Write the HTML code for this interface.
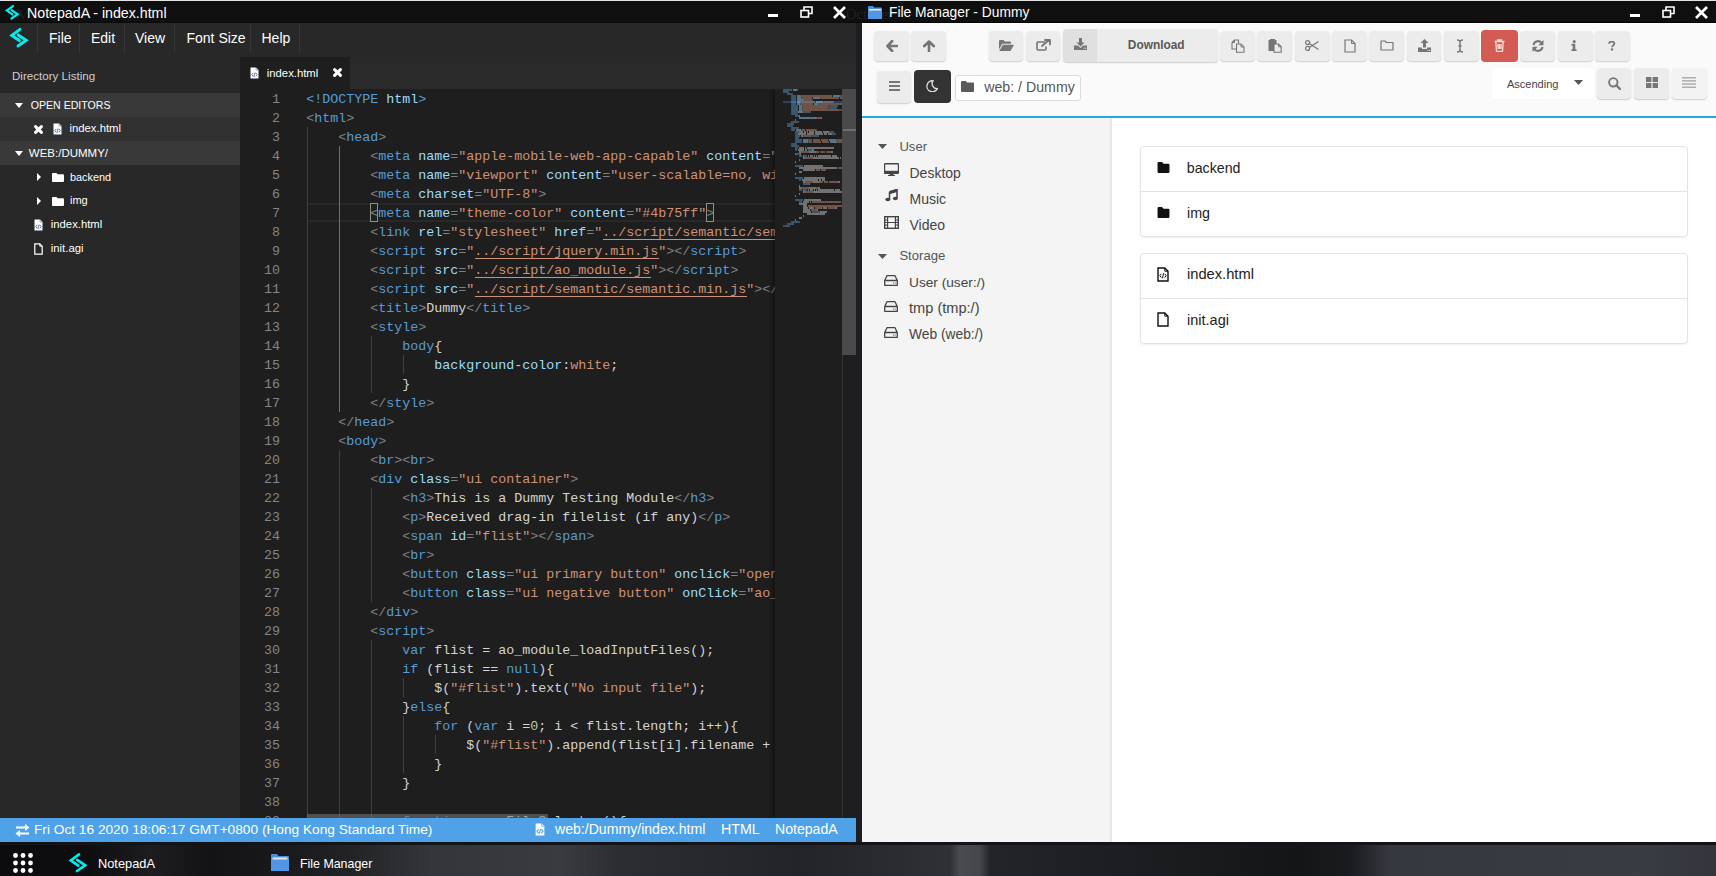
<!DOCTYPE html>
<html><head><meta charset="utf-8"><title>NotepadA</title><style>
*{box-sizing:border-box;margin:0;padding:0}
html,body{width:1716px;height:876px;overflow:hidden}
body{position:relative;font-family:"Liberation Sans",sans-serif;background:#15171a}
.a{position:absolute}
.t{line-height:1;white-space:nowrap}
.code{font-family:"Liberation Mono",monospace;font-size:13.333px;line-height:19px;white-space:pre;color:#d4d4d4}
.ln{font-family:"Liberation Mono",monospace;font-size:13.333px;line-height:19px;color:#858585;text-align:right;width:40px}
.d{color:#808080}.tg{color:#569cd6}.n{color:#9cdcfe}.s{color:#ce9178}.k{color:#569cd6}.g{color:#b5cea8}.c{color:#9cdcfe}
.mm{height:1.6px;opacity:.46}
.btn{background:#ececec;border-radius:4px;box-shadow:0 1px 1.5px rgba(0,0,0,.18)}
</style></head><body>
<div class="a" style="left:0;top:842px;width:1716px;height:34px;background:linear-gradient(90deg,#0c0c0e 0px,#0e0e10 90px,#1d1d1f 150px,#131315 210px,#1a1a1d 290px,#222326 350px,#34353a 430px,#3a3b40 560px,#2c2d31 620px,#232428 800px,#2b2c30 900px,#303135 950px,#4a4b50 960px,#45464b 980px,#232427 990px,#1c1d20 1144px,#141517 1300px,#1a1b1e 1350px,#363840 1390px,#3a3c44 1640px,#33353b 1716px)"></div>
<div class="a" style="left:0;top:842px;width:1716px;height:3px;background:#131417"></div>
<div class="a" style="left:0;top:0;width:1716px;height:1px;background:#e4e4e4"></div>
<div class="a" style="left:0;top:1px;width:1716px;height:22px;background:#0f0f0f"></div>
<div class="a" style="left:0;top:22px;width:862px;height:1px;background:#0a0a0a"></div>
<div class="a t" style="left:16px;top:6px;font-family:Liberation Serif,serif;font-size:17px;color:#1c1c1c">My</div>
<div class="a t" style="left:846px;top:6.5px;font-family:Liberation Serif,serif;font-size:14.5px;color:#222">October</div>
<div class="a" style="left:856px;top:23px;width:6px;height:819px;background:#1b1d20"></div>
<svg class="a" style="left:1.3px;top:2.3px" width="22.5" height="21.0" viewBox="0 0 30 28"><g fill="none" stroke="#00eeee" stroke-width="3.0" stroke-linecap="round" stroke-linejoin="miter"><polyline points="16,5.4 7.8,11.4 15.3,16.6"/><polyline points="14.2,10.9 22.2,16.3 14,22"/></g></svg>
<div class="a t" style="left:27px;top:5.78px;font-size:14.2px;color:#fff;">NotepadA - index.html</div>
<div class="a" style="left:768px;top:14px;width:10px;height:3px;background:#fff"></div><svg class="a" style="left:800px;top:6px" width="13" height="12" viewBox="0 0 13 12"><g fill="none" stroke="#fff" stroke-width="1.6"><rect x="1" y="4.5" width="7.5" height="6.5"/><polyline points="4,4.5 4,1 12,1 12,7.5 8.5,7.5"/></g></svg><svg class="a" style="left:833px;top:6px" width="13" height="13" viewBox="0 0 13 13"><g stroke="#fff" stroke-width="2.6"><line x1="1" y1="1" x2="12" y2="12"/><line x1="12" y1="1" x2="1" y2="12"/></g></svg>
<div class="a" style="left:0;top:23px;width:856px;height:34px;background:#282828"></div>
<svg class="a" style="left:4px;top:24px" width="30.0" height="28.0" viewBox="0 0 30 28"><g fill="none" stroke="#00eeee" stroke-width="3.0" stroke-linecap="round" stroke-linejoin="miter"><polyline points="16,5.4 7.8,11.4 15.3,16.6"/><polyline points="14.2,10.9 22.2,16.3 14,22"/></g></svg>
<div class="a" style="left:37px;top:24px;width:1px;height:28px;background:#363636"></div>
<div class="a" style="left:79px;top:24px;width:1px;height:28px;background:#363636"></div>
<div class="a" style="left:124px;top:24px;width:1px;height:28px;background:#363636"></div>
<div class="a" style="left:174px;top:24px;width:1px;height:28px;background:#363636"></div>
<div class="a" style="left:250px;top:24px;width:1px;height:28px;background:#363636"></div>
<div class="a" style="left:299px;top:24px;width:1px;height:28px;background:#363636"></div>
<div class="a t" style="left:49px;top:31.45px;font-size:14px;color:#fff;">File</div>
<div class="a t" style="left:91px;top:31.45px;font-size:14px;color:#fff;">Edit</div>
<div class="a t" style="left:135px;top:31.45px;font-size:14px;color:#fff;">View</div>
<div class="a t" style="left:186.5px;top:31.45px;font-size:14px;color:#fff;">Font Size</div>
<div class="a t" style="left:261.5px;top:31.45px;font-size:14px;color:#fff;">Help</div>
<div class="a" style="left:0;top:57px;width:240px;height:761px;background:#282828"></div>
<div class="a t" style="left:12px;top:69.88px;font-size:11.6px;color:#cfcfcf;">Directory Listing</div>
<div class="a" style="left:0;top:93px;width:240px;height:24px;background:#393939"></div>
<div class="a" style="left:0;top:117px;width:240px;height:24px;background:#313131"></div>
<div class="a" style="left:0;top:141px;width:240px;height:24px;background:#393939"></div>
<svg class="a" style="left:15px;top:103px" width="8" height="5"><polygon points="0,0 8,0 4.0,5" fill="#fff"/></svg>
<div class="a t" style="left:30.7px;top:100.23px;font-size:10.6px;color:#fff;">OPEN EDITORS</div>
<svg class="a" style="left:33.5px;top:124.5px" width="9" height="9" viewBox="0 0 9 9"><g stroke="#fff" stroke-width="3" stroke-linecap="round"><line x1="1.6" y1="1.6" x2="7.4" y2="7.4"/><line x1="7.4" y1="1.6" x2="1.6" y2="7.4"/></g></svg>
<svg class="a" style="left:53px;top:122.5px" width="9" height="12" viewBox="0 0 9 12"><path d="M0.5,0.5 H6 L8.5,3 V11.5 H0.5 Z" fill="#fff"/><path d="M6,0.5 V3 H8.5" fill="none" stroke="#5577aa" stroke-width="0.6"/><path d="M3.3,5.9 L1.7,7.7 L3.3,9.5 M5.7,5.9 L7.3,7.7 L5.7,9.5 M5.1,5.6 L3.9,9.8" fill="none" stroke="#5577aa" stroke-width="1"/></svg>
<div class="a t" style="left:69.5px;top:123.33px;font-size:11.3px;color:#fff;">index.html</div>
<svg class="a" style="left:15px;top:151px" width="8" height="5"><polygon points="0,0 8,0 4.0,5" fill="#fff"/></svg>
<div class="a t" style="left:28.8px;top:147.57px;font-size:11.5px;color:#fff;">WEB:/DUMMY/</div>
<svg class="a" style="left:37px;top:173px" width="4" height="8"><polygon points="0,0 4,4.0 0,8" fill="#fff"/></svg>
<svg class="a" style="left:52px;top:172.5px" width="12" height="9" viewBox="0 0 12 9"><path d="M0,1 Q0,0 1,0 H4.5 L5.5,1.3 H11 Q12,1.3 12,2.3 V8 Q12,9 11,9 H1 Q0,9 0,8 Z" fill="#fff"/></svg>
<div class="a t" style="left:70px;top:171.57px;font-size:10.9px;color:#fff;">backend</div>
<svg class="a" style="left:37px;top:197px" width="4" height="8"><polygon points="0,0 4,4.0 0,8" fill="#fff"/></svg>
<svg class="a" style="left:52px;top:196.5px" width="12" height="9" viewBox="0 0 12 9"><path d="M0,1 Q0,0 1,0 H4.5 L5.5,1.3 H11 Q12,1.3 12,2.3 V8 Q12,9 11,9 H1 Q0,9 0,8 Z" fill="#fff"/></svg>
<div class="a t" style="left:70px;top:195.49px;font-size:11px;color:#fff;">img</div>
<svg class="a" style="left:34px;top:218.5px" width="9" height="12" viewBox="0 0 9 12"><path d="M0.5,0.5 H6 L8.5,3 V11.5 H0.5 Z" fill="#fff"/><path d="M6,0.5 V3 H8.5" fill="none" stroke="#5577aa" stroke-width="0.6"/><path d="M3.3,5.9 L1.7,7.7 L3.3,9.5 M5.7,5.9 L7.3,7.7 L5.7,9.5 M5.1,5.6 L3.9,9.8" fill="none" stroke="#5577aa" stroke-width="1"/></svg>
<div class="a t" style="left:50.8px;top:219.23px;font-size:11.3px;color:#fff;">index.html</div>
<svg class="a" style="left:34px;top:242.5px" width="9" height="12" viewBox="0 0 9 12"><path d="M0.8,0.8 H5.8 L8.2,3.2 V11.2 H0.8 Z" fill="none" stroke="#fff" stroke-width="1.2"/><path d="M5.8,0.8 V3.2 H8.2" fill="none" stroke="#fff" stroke-width="0.96"/></svg>
<div class="a t" style="left:50.8px;top:243.23px;font-size:11.3px;color:#fff;">init.agi</div>
<div class="a" style="left:240px;top:57px;width:616px;height:32px;background:#2a2a2a"></div>
<div class="a" style="left:240px;top:57px;width:110px;height:32px;background:#1e1e1e"></div>
<svg class="a" style="left:250px;top:67px" width="9" height="12" viewBox="0 0 9 12"><path d="M0.5,0.5 H6 L8.5,3 V11.5 H0.5 Z" fill="#fff"/><path d="M6,0.5 V3 H8.5" fill="none" stroke="#5577aa" stroke-width="0.6"/><path d="M3.3,5.9 L1.7,7.7 L3.3,9.5 M5.7,5.9 L7.3,7.7 L5.7,9.5 M5.1,5.6 L3.9,9.8" fill="none" stroke="#5577aa" stroke-width="1"/></svg>
<div class="a t" style="left:266.8px;top:68.03px;font-size:11.3px;color:#fff;">index.html</div>
<svg class="a" style="left:332.5px;top:68px" width="9" height="9" viewBox="0 0 9 9"><g stroke="#fff" stroke-width="3" stroke-linecap="round"><line x1="1.6" y1="1.6" x2="7.4" y2="7.4"/><line x1="7.4" y1="1.6" x2="1.6" y2="7.4"/></g></svg>
<div class="a" style="left:240px;top:89px;width:616px;height:729px;background:#1e1e1e;overflow:hidden" id="ed">
<div class="a" style="left:67px;top:114px;width:468px;height:19px;border-top:2px solid #282828;border-bottom:2px solid #282828"></div>
<div class="a" style="left:67px;top:38px;width:1px;height:19px;background:#404040"></div>
<div class="a" style="left:67px;top:57px;width:1px;height:19px;background:#404040"></div>
<div class="a" style="left:99px;top:57px;width:1px;height:19px;background:#707070"></div>
<div class="a" style="left:67px;top:76px;width:1px;height:19px;background:#404040"></div>
<div class="a" style="left:99px;top:76px;width:1px;height:19px;background:#707070"></div>
<div class="a" style="left:67px;top:95px;width:1px;height:19px;background:#404040"></div>
<div class="a" style="left:99px;top:95px;width:1px;height:19px;background:#707070"></div>
<div class="a" style="left:67px;top:114px;width:1px;height:19px;background:#404040"></div>
<div class="a" style="left:99px;top:114px;width:1px;height:19px;background:#707070"></div>
<div class="a" style="left:67px;top:133px;width:1px;height:19px;background:#404040"></div>
<div class="a" style="left:99px;top:133px;width:1px;height:19px;background:#707070"></div>
<div class="a" style="left:67px;top:152px;width:1px;height:19px;background:#404040"></div>
<div class="a" style="left:99px;top:152px;width:1px;height:19px;background:#707070"></div>
<div class="a" style="left:67px;top:171px;width:1px;height:19px;background:#404040"></div>
<div class="a" style="left:99px;top:171px;width:1px;height:19px;background:#707070"></div>
<div class="a" style="left:67px;top:190px;width:1px;height:19px;background:#404040"></div>
<div class="a" style="left:99px;top:190px;width:1px;height:19px;background:#707070"></div>
<div class="a" style="left:67px;top:209px;width:1px;height:19px;background:#404040"></div>
<div class="a" style="left:99px;top:209px;width:1px;height:19px;background:#707070"></div>
<div class="a" style="left:67px;top:228px;width:1px;height:19px;background:#404040"></div>
<div class="a" style="left:99px;top:228px;width:1px;height:19px;background:#707070"></div>
<div class="a" style="left:67px;top:247px;width:1px;height:19px;background:#404040"></div>
<div class="a" style="left:99px;top:247px;width:1px;height:19px;background:#707070"></div>
<div class="a" style="left:131px;top:247px;width:1px;height:19px;background:#404040"></div>
<div class="a" style="left:67px;top:266px;width:1px;height:19px;background:#404040"></div>
<div class="a" style="left:99px;top:266px;width:1px;height:19px;background:#707070"></div>
<div class="a" style="left:131px;top:266px;width:1px;height:19px;background:#404040"></div>
<div class="a" style="left:163px;top:266px;width:1px;height:19px;background:#404040"></div>
<div class="a" style="left:67px;top:285px;width:1px;height:19px;background:#404040"></div>
<div class="a" style="left:99px;top:285px;width:1px;height:19px;background:#707070"></div>
<div class="a" style="left:131px;top:285px;width:1px;height:19px;background:#404040"></div>
<div class="a" style="left:67px;top:304px;width:1px;height:19px;background:#404040"></div>
<div class="a" style="left:99px;top:304px;width:1px;height:19px;background:#707070"></div>
<div class="a" style="left:67px;top:323px;width:1px;height:19px;background:#404040"></div>
<div class="a" style="left:67px;top:342px;width:1px;height:19px;background:#404040"></div>
<div class="a" style="left:67px;top:361px;width:1px;height:19px;background:#404040"></div>
<div class="a" style="left:99px;top:361px;width:1px;height:19px;background:#404040"></div>
<div class="a" style="left:67px;top:380px;width:1px;height:19px;background:#404040"></div>
<div class="a" style="left:99px;top:380px;width:1px;height:19px;background:#404040"></div>
<div class="a" style="left:67px;top:399px;width:1px;height:19px;background:#404040"></div>
<div class="a" style="left:99px;top:399px;width:1px;height:19px;background:#404040"></div>
<div class="a" style="left:131px;top:399px;width:1px;height:19px;background:#404040"></div>
<div class="a" style="left:67px;top:418px;width:1px;height:19px;background:#404040"></div>
<div class="a" style="left:99px;top:418px;width:1px;height:19px;background:#404040"></div>
<div class="a" style="left:131px;top:418px;width:1px;height:19px;background:#404040"></div>
<div class="a" style="left:67px;top:437px;width:1px;height:19px;background:#404040"></div>
<div class="a" style="left:99px;top:437px;width:1px;height:19px;background:#404040"></div>
<div class="a" style="left:131px;top:437px;width:1px;height:19px;background:#404040"></div>
<div class="a" style="left:67px;top:456px;width:1px;height:19px;background:#404040"></div>
<div class="a" style="left:99px;top:456px;width:1px;height:19px;background:#404040"></div>
<div class="a" style="left:131px;top:456px;width:1px;height:19px;background:#404040"></div>
<div class="a" style="left:67px;top:475px;width:1px;height:19px;background:#404040"></div>
<div class="a" style="left:99px;top:475px;width:1px;height:19px;background:#404040"></div>
<div class="a" style="left:131px;top:475px;width:1px;height:19px;background:#404040"></div>
<div class="a" style="left:67px;top:494px;width:1px;height:19px;background:#404040"></div>
<div class="a" style="left:99px;top:494px;width:1px;height:19px;background:#404040"></div>
<div class="a" style="left:131px;top:494px;width:1px;height:19px;background:#404040"></div>
<div class="a" style="left:67px;top:513px;width:1px;height:19px;background:#404040"></div>
<div class="a" style="left:99px;top:513px;width:1px;height:19px;background:#404040"></div>
<div class="a" style="left:67px;top:532px;width:1px;height:19px;background:#404040"></div>
<div class="a" style="left:99px;top:532px;width:1px;height:19px;background:#404040"></div>
<div class="a" style="left:67px;top:551px;width:1px;height:19px;background:#404040"></div>
<div class="a" style="left:99px;top:551px;width:1px;height:19px;background:#404040"></div>
<div class="a" style="left:131px;top:551px;width:1px;height:19px;background:#404040"></div>
<div class="a" style="left:67px;top:570px;width:1px;height:19px;background:#404040"></div>
<div class="a" style="left:99px;top:570px;width:1px;height:19px;background:#404040"></div>
<div class="a" style="left:131px;top:570px;width:1px;height:19px;background:#404040"></div>
<div class="a" style="left:67px;top:589px;width:1px;height:19px;background:#404040"></div>
<div class="a" style="left:99px;top:589px;width:1px;height:19px;background:#404040"></div>
<div class="a" style="left:131px;top:589px;width:1px;height:19px;background:#404040"></div>
<div class="a" style="left:163px;top:589px;width:1px;height:19px;background:#404040"></div>
<div class="a" style="left:67px;top:608px;width:1px;height:19px;background:#404040"></div>
<div class="a" style="left:99px;top:608px;width:1px;height:19px;background:#404040"></div>
<div class="a" style="left:131px;top:608px;width:1px;height:19px;background:#404040"></div>
<div class="a" style="left:67px;top:627px;width:1px;height:19px;background:#404040"></div>
<div class="a" style="left:99px;top:627px;width:1px;height:19px;background:#404040"></div>
<div class="a" style="left:131px;top:627px;width:1px;height:19px;background:#404040"></div>
<div class="a" style="left:163px;top:627px;width:1px;height:19px;background:#404040"></div>
<div class="a" style="left:67px;top:646px;width:1px;height:19px;background:#404040"></div>
<div class="a" style="left:99px;top:646px;width:1px;height:19px;background:#404040"></div>
<div class="a" style="left:131px;top:646px;width:1px;height:19px;background:#404040"></div>
<div class="a" style="left:163px;top:646px;width:1px;height:19px;background:#404040"></div>
<div class="a" style="left:195px;top:646px;width:1px;height:19px;background:#404040"></div>
<div class="a" style="left:67px;top:665px;width:1px;height:19px;background:#404040"></div>
<div class="a" style="left:99px;top:665px;width:1px;height:19px;background:#404040"></div>
<div class="a" style="left:131px;top:665px;width:1px;height:19px;background:#404040"></div>
<div class="a" style="left:163px;top:665px;width:1px;height:19px;background:#404040"></div>
<div class="a" style="left:67px;top:684px;width:1px;height:19px;background:#404040"></div>
<div class="a" style="left:99px;top:684px;width:1px;height:19px;background:#404040"></div>
<div class="a" style="left:131px;top:684px;width:1px;height:19px;background:#404040"></div>
<div class="a" style="left:67px;top:703px;width:1px;height:19px;background:#404040"></div>
<div class="a" style="left:99px;top:703px;width:1px;height:19px;background:#404040"></div>
<div class="a" style="left:131px;top:703px;width:1px;height:19px;background:#404040"></div>
<div class="a" style="left:67px;top:722px;width:1px;height:19px;background:#404040"></div>
<div class="a" style="left:99px;top:722px;width:1px;height:19px;background:#404040"></div>
<div class="a" style="left:131px;top:722px;width:1px;height:19px;background:#404040"></div>
<div class="a" style="left:130px;top:114px;width:8px;height:19px;border:1px solid #8a8f8a;background:#1a231a"></div>
<div class="a" style="left:466px;top:114px;width:8px;height:19px;border:1px solid #8a8f8a;background:#1a231a"></div>
<div class="a ln" style="left:0;top:1px">1</div>
<div class="a ln" style="left:0;top:20px">2</div>
<div class="a ln" style="left:0;top:39px">3</div>
<div class="a ln" style="left:0;top:58px">4</div>
<div class="a ln" style="left:0;top:77px">5</div>
<div class="a ln" style="left:0;top:96px">6</div>
<div class="a ln" style="left:0;top:115px">7</div>
<div class="a ln" style="left:0;top:134px">8</div>
<div class="a ln" style="left:0;top:153px">9</div>
<div class="a ln" style="left:0;top:172px">10</div>
<div class="a ln" style="left:0;top:191px">11</div>
<div class="a ln" style="left:0;top:210px">12</div>
<div class="a ln" style="left:0;top:229px">13</div>
<div class="a ln" style="left:0;top:248px">14</div>
<div class="a ln" style="left:0;top:267px">15</div>
<div class="a ln" style="left:0;top:286px">16</div>
<div class="a ln" style="left:0;top:305px">17</div>
<div class="a ln" style="left:0;top:324px">18</div>
<div class="a ln" style="left:0;top:343px">19</div>
<div class="a ln" style="left:0;top:362px">20</div>
<div class="a ln" style="left:0;top:381px">21</div>
<div class="a ln" style="left:0;top:400px">22</div>
<div class="a ln" style="left:0;top:419px">23</div>
<div class="a ln" style="left:0;top:438px">24</div>
<div class="a ln" style="left:0;top:457px">25</div>
<div class="a ln" style="left:0;top:476px">26</div>
<div class="a ln" style="left:0;top:495px">27</div>
<div class="a ln" style="left:0;top:514px">28</div>
<div class="a ln" style="left:0;top:533px">29</div>
<div class="a ln" style="left:0;top:552px">30</div>
<div class="a ln" style="left:0;top:571px">31</div>
<div class="a ln" style="left:0;top:590px">32</div>
<div class="a ln" style="left:0;top:609px">33</div>
<div class="a ln" style="left:0;top:628px">34</div>
<div class="a ln" style="left:0;top:647px">35</div>
<div class="a ln" style="left:0;top:666px">36</div>
<div class="a ln" style="left:0;top:685px">37</div>
<div class="a ln" style="left:0;top:704px">38</div>
<div class="a ln" style="left:0;top:723px">39</div>
<div class="a code" style="left:66.3px;top:1px"><span class="tg">&lt;!DOCTYPE</span> <span class="c">html</span><span class="tg">&gt;</span></div>
<div class="a code" style="left:66.3px;top:20px"><span class="d">&lt;</span><span class="tg">html</span><span class="d">&gt;</span></div>
<div class="a code" style="left:66.3px;top:39px">    <span class="d">&lt;</span><span class="tg">head</span><span class="d">&gt;</span></div>
<div class="a code" style="left:66.3px;top:58px">        <span class="d">&lt;</span><span class="tg">meta</span> <span class="n">name</span><span class="d">=</span><span class="s">&quot;apple-mobile-web-app-capable&quot;</span> <span class="n">content</span><span class="d">=</span><span class="s">&quot;yes&quot;</span><span class="d">&gt;</span></div>
<div class="a code" style="left:66.3px;top:77px">        <span class="d">&lt;</span><span class="tg">meta</span> <span class="n">name</span><span class="d">=</span><span class="s">&quot;viewport&quot;</span> <span class="n">content</span><span class="d">=</span><span class="s">&quot;user-scalable=no, width=device-width, initial-scale=1&quot;</span><span class="d">&gt;</span></div>
<div class="a code" style="left:66.3px;top:96px">        <span class="d">&lt;</span><span class="tg">meta</span> <span class="n">charset</span><span class="d">=</span><span class="s">&quot;UTF-8&quot;</span><span class="d">&gt;</span></div>
<div class="a code" style="left:66.3px;top:115px">        <span class="d">&lt;</span><span class="tg">meta</span> <span class="n">name</span><span class="d">=</span><span class="s">&quot;theme-color&quot;</span> <span class="n">content</span><span class="d">=</span><span class="s">&quot;#4b75ff&quot;</span><span class="d">&gt;</span></div>
<div class="a code" style="left:66.3px;top:134px">        <span class="d">&lt;</span><span class="tg">link</span> <span class="n">rel</span><span class="d">=</span><span class="s">&quot;stylesheet&quot;</span> <span class="n">href</span><span class="d">=</span><span class="s">&quot;../script/semantic/semantic.min.css&quot;</span><span class="d">&gt;</span></div>
<div class="a code" style="left:66.3px;top:153px">        <span class="d">&lt;</span><span class="tg">script</span> <span class="n">src</span><span class="d">=</span><span class="s">&quot;../script/jquery.min.js&quot;</span><span class="d">&gt;&lt;/</span><span class="tg">script</span><span class="d">&gt;</span></div>
<div class="a code" style="left:66.3px;top:172px">        <span class="d">&lt;</span><span class="tg">script</span> <span class="n">src</span><span class="d">=</span><span class="s">&quot;../script/ao_module.js&quot;</span><span class="d">&gt;&lt;/</span><span class="tg">script</span><span class="d">&gt;</span></div>
<div class="a code" style="left:66.3px;top:191px">        <span class="d">&lt;</span><span class="tg">script</span> <span class="n">src</span><span class="d">=</span><span class="s">&quot;../script/semantic/semantic.min.js&quot;</span><span class="d">&gt;&lt;/</span><span class="tg">script</span><span class="d">&gt;</span></div>
<div class="a code" style="left:66.3px;top:210px">        <span class="d">&lt;</span><span class="tg">title</span><span class="d">&gt;</span>Dummy<span class="d">&lt;/</span><span class="tg">title</span><span class="d">&gt;</span></div>
<div class="a code" style="left:66.3px;top:229px">        <span class="d">&lt;</span><span class="tg">style</span><span class="d">&gt;</span></div>
<div class="a code" style="left:66.3px;top:248px">            <span class="tg">body</span>{</div>
<div class="a code" style="left:66.3px;top:267px">                <span class="c">background-color</span>:<span class="s">white</span>;</div>
<div class="a code" style="left:66.3px;top:286px">            }</div>
<div class="a code" style="left:66.3px;top:305px">        <span class="d">&lt;/</span><span class="tg">style</span><span class="d">&gt;</span></div>
<div class="a code" style="left:66.3px;top:324px">    <span class="d">&lt;/</span><span class="tg">head</span><span class="d">&gt;</span></div>
<div class="a code" style="left:66.3px;top:343px">    <span class="d">&lt;</span><span class="tg">body</span><span class="d">&gt;</span></div>
<div class="a code" style="left:66.3px;top:362px">        <span class="d">&lt;</span><span class="tg">br</span><span class="d">&gt;&lt;</span><span class="tg">br</span><span class="d">&gt;</span></div>
<div class="a code" style="left:66.3px;top:381px">        <span class="d">&lt;</span><span class="tg">div</span> <span class="n">class</span><span class="d">=</span><span class="s">&quot;ui container&quot;</span><span class="d">&gt;</span></div>
<div class="a code" style="left:66.3px;top:400px">            <span class="d">&lt;</span><span class="tg">h3</span><span class="d">&gt;</span>This is a Dummy Testing Module<span class="d">&lt;/</span><span class="tg">h3</span><span class="d">&gt;</span></div>
<div class="a code" style="left:66.3px;top:419px">            <span class="d">&lt;</span><span class="tg">p</span><span class="d">&gt;</span>Received drag-in filelist (if any)<span class="d">&lt;/</span><span class="tg">p</span><span class="d">&gt;</span></div>
<div class="a code" style="left:66.3px;top:438px">            <span class="d">&lt;</span><span class="tg">span</span> <span class="n">id</span><span class="d">=</span><span class="s">&quot;flist&quot;</span><span class="d">&gt;&lt;/</span><span class="tg">span</span><span class="d">&gt;</span></div>
<div class="a code" style="left:66.3px;top:457px">            <span class="d">&lt;</span><span class="tg">br</span><span class="d">&gt;</span></div>
<div class="a code" style="left:66.3px;top:476px">            <span class="d">&lt;</span><span class="tg">button</span> <span class="n">class</span><span class="d">=</span><span class="s">&quot;ui primary button&quot;</span> <span class="n">onclick</span><span class="d">=</span><span class="s">&quot;openFileSelector();&quot;</span><span class="d">&gt;</span>Open File<span class="d">&lt;/</span><span class="tg">button</span><span class="d">&gt;</span></div>
<div class="a code" style="left:66.3px;top:495px">            <span class="d">&lt;</span><span class="tg">button</span> <span class="n">class</span><span class="d">=</span><span class="s">&quot;ui negative button&quot;</span> <span class="n">onClick</span><span class="d">=</span><span class="s">&quot;ao_module_close();&quot;</span><span class="d">&gt;</span>Close<span class="d">&lt;/</span><span class="tg">button</span><span class="d">&gt;</span></div>
<div class="a code" style="left:66.3px;top:514px">        <span class="d">&lt;/</span><span class="tg">div</span><span class="d">&gt;</span></div>
<div class="a code" style="left:66.3px;top:533px">        <span class="d">&lt;</span><span class="tg">script</span><span class="d">&gt;</span></div>
<div class="a code" style="left:66.3px;top:552px">            <span class="k">var</span> flist = ao_module_loadInputFiles();</div>
<div class="a code" style="left:66.3px;top:571px">            <span class="k">if</span> (flist == <span class="k">null</span>){</div>
<div class="a code" style="left:66.3px;top:590px">                $(<span class="s">&quot;#flist&quot;</span>).text(<span class="s">&quot;No input file&quot;</span>);</div>
<div class="a code" style="left:66.3px;top:609px">            }<span class="k">else</span>{</div>
<div class="a code" style="left:66.3px;top:628px">                <span class="k">for</span> (<span class="k">var</span> i =<span class="g">0</span>; i &lt; flist.length; i++){</div>
<div class="a code" style="left:66.3px;top:647px">                    $(<span class="s">&quot;#flist&quot;</span>).append(flist[i].filename + <span class="s">&quot;&lt;br&gt;&quot;</span>);</div>
<div class="a code" style="left:66.3px;top:666px">                }</div>
<div class="a code" style="left:66.3px;top:685px">            }</div>
<div class="a code" style="left:66.3px;top:704px"></div>
<div class="a code" style="left:66.3px;top:723px">            <span class="k">function</span> openFileSelector(){</div>
<div class="a" style="left:363px;top:150px;width:280px;height:1px;background:#ce9178"></div>
<div class="a" style="left:235px;top:169px;width:184px;height:1px;background:#ce9178"></div>
<div class="a" style="left:235px;top:188px;width:176px;height:1px;background:#ce9178"></div>
<div class="a" style="left:235px;top:207px;width:272px;height:1px;background:#ce9178"></div>
<div class="a" style="left:535px;top:0;width:67px;height:729px;background:#1e1e1e;box-shadow:-3px 0 4px rgba(0,0,0,.35)"></div>
<div class="a" style="left:543px;top:12px;width:59px;height:2px;background:#264f78;opacity:.8"></div><div class="a mm" style="left:543px;top:0px;width:9px;background:#569cd6"></div><div class="a mm" style="left:553px;top:0px;width:4px;background:#9cdcfe"></div><div class="a mm" style="left:557px;top:0px;width:1px;background:#569cd6"></div><div class="a mm" style="left:543px;top:2px;width:1px;background:#808080"></div><div class="a mm" style="left:544px;top:2px;width:4px;background:#569cd6"></div><div class="a mm" style="left:548px;top:2px;width:1px;background:#808080"></div><div class="a mm" style="left:547px;top:4px;width:1px;background:#808080"></div><div class="a mm" style="left:548px;top:4px;width:4px;background:#569cd6"></div><div class="a mm" style="left:552px;top:4px;width:1px;background:#808080"></div><div class="a mm" style="left:551px;top:6px;width:1px;background:#808080"></div><div class="a mm" style="left:552px;top:6px;width:4px;background:#569cd6"></div><div class="a mm" style="left:557px;top:6px;width:4px;background:#9cdcfe"></div><div class="a mm" style="left:561px;top:6px;width:1px;background:#808080"></div><div class="a mm" style="left:562px;top:6px;width:30px;background:#ce9178"></div><div class="a mm" style="left:593px;top:6px;width:7px;background:#9cdcfe"></div><div class="a mm" style="left:600px;top:6px;width:1px;background:#808080"></div><div class="a mm" style="left:601px;top:6px;width:1px;background:#ce9178"></div><div class="a mm" style="left:551px;top:8px;width:1px;background:#808080"></div><div class="a mm" style="left:552px;top:8px;width:4px;background:#569cd6"></div><div class="a mm" style="left:557px;top:8px;width:4px;background:#9cdcfe"></div><div class="a mm" style="left:561px;top:8px;width:1px;background:#808080"></div><div class="a mm" style="left:562px;top:8px;width:10px;background:#ce9178"></div><div class="a mm" style="left:573px;top:8px;width:7px;background:#9cdcfe"></div><div class="a mm" style="left:580px;top:8px;width:1px;background:#808080"></div><div class="a mm" style="left:581px;top:8px;width:18px;background:#ce9178"></div><div class="a mm" style="left:600px;top:8px;width:2px;background:#ce9178"></div><div class="a mm" style="left:551px;top:10px;width:1px;background:#808080"></div><div class="a mm" style="left:552px;top:10px;width:4px;background:#569cd6"></div><div class="a mm" style="left:557px;top:10px;width:7px;background:#9cdcfe"></div><div class="a mm" style="left:564px;top:10px;width:1px;background:#808080"></div><div class="a mm" style="left:565px;top:10px;width:7px;background:#ce9178"></div><div class="a mm" style="left:572px;top:10px;width:1px;background:#808080"></div><div class="a mm" style="left:551px;top:12px;width:1px;background:#808080"></div><div class="a mm" style="left:552px;top:12px;width:4px;background:#569cd6"></div><div class="a mm" style="left:557px;top:12px;width:4px;background:#9cdcfe"></div><div class="a mm" style="left:561px;top:12px;width:1px;background:#808080"></div><div class="a mm" style="left:562px;top:12px;width:13px;background:#ce9178"></div><div class="a mm" style="left:576px;top:12px;width:7px;background:#9cdcfe"></div><div class="a mm" style="left:583px;top:12px;width:1px;background:#808080"></div><div class="a mm" style="left:584px;top:12px;width:9px;background:#ce9178"></div><div class="a mm" style="left:593px;top:12px;width:1px;background:#808080"></div><div class="a mm" style="left:551px;top:14px;width:1px;background:#808080"></div><div class="a mm" style="left:552px;top:14px;width:4px;background:#569cd6"></div><div class="a mm" style="left:557px;top:14px;width:3px;background:#9cdcfe"></div><div class="a mm" style="left:560px;top:14px;width:1px;background:#808080"></div><div class="a mm" style="left:561px;top:14px;width:12px;background:#ce9178"></div><div class="a mm" style="left:574px;top:14px;width:4px;background:#9cdcfe"></div><div class="a mm" style="left:578px;top:14px;width:1px;background:#808080"></div><div class="a mm" style="left:579px;top:14px;width:23px;background:#ce9178"></div><div class="a mm" style="left:551px;top:16px;width:1px;background:#808080"></div><div class="a mm" style="left:552px;top:16px;width:6px;background:#569cd6"></div><div class="a mm" style="left:559px;top:16px;width:3px;background:#9cdcfe"></div><div class="a mm" style="left:562px;top:16px;width:1px;background:#808080"></div><div class="a mm" style="left:563px;top:16px;width:25px;background:#ce9178"></div><div class="a mm" style="left:588px;top:16px;width:3px;background:#808080"></div><div class="a mm" style="left:591px;top:16px;width:6px;background:#569cd6"></div><div class="a mm" style="left:597px;top:16px;width:1px;background:#808080"></div><div class="a mm" style="left:551px;top:18px;width:1px;background:#808080"></div><div class="a mm" style="left:552px;top:18px;width:6px;background:#569cd6"></div><div class="a mm" style="left:559px;top:18px;width:3px;background:#9cdcfe"></div><div class="a mm" style="left:562px;top:18px;width:1px;background:#808080"></div><div class="a mm" style="left:563px;top:18px;width:24px;background:#ce9178"></div><div class="a mm" style="left:587px;top:18px;width:3px;background:#808080"></div><div class="a mm" style="left:590px;top:18px;width:6px;background:#569cd6"></div><div class="a mm" style="left:596px;top:18px;width:1px;background:#808080"></div><div class="a mm" style="left:551px;top:20px;width:1px;background:#808080"></div><div class="a mm" style="left:552px;top:20px;width:6px;background:#569cd6"></div><div class="a mm" style="left:559px;top:20px;width:3px;background:#9cdcfe"></div><div class="a mm" style="left:562px;top:20px;width:1px;background:#808080"></div><div class="a mm" style="left:563px;top:20px;width:36px;background:#ce9178"></div><div class="a mm" style="left:599px;top:20px;width:3px;background:#808080"></div><div class="a mm" style="left:551px;top:22px;width:1px;background:#808080"></div><div class="a mm" style="left:552px;top:22px;width:5px;background:#569cd6"></div><div class="a mm" style="left:557px;top:22px;width:1px;background:#808080"></div><div class="a mm" style="left:558px;top:22px;width:5px;background:#d4d4d4"></div><div class="a mm" style="left:563px;top:22px;width:2px;background:#808080"></div><div class="a mm" style="left:565px;top:22px;width:5px;background:#569cd6"></div><div class="a mm" style="left:570px;top:22px;width:1px;background:#808080"></div><div class="a mm" style="left:551px;top:24px;width:1px;background:#808080"></div><div class="a mm" style="left:552px;top:24px;width:5px;background:#569cd6"></div><div class="a mm" style="left:557px;top:24px;width:1px;background:#808080"></div><div class="a mm" style="left:555px;top:26px;width:4px;background:#569cd6"></div><div class="a mm" style="left:559px;top:26px;width:1px;background:#d4d4d4"></div><div class="a mm" style="left:559px;top:28px;width:16px;background:#9cdcfe"></div><div class="a mm" style="left:575px;top:28px;width:1px;background:#d4d4d4"></div><div class="a mm" style="left:576px;top:28px;width:5px;background:#ce9178"></div><div class="a mm" style="left:581px;top:28px;width:1px;background:#d4d4d4"></div><div class="a mm" style="left:555px;top:30px;width:1px;background:#d4d4d4"></div><div class="a mm" style="left:551px;top:32px;width:2px;background:#808080"></div><div class="a mm" style="left:553px;top:32px;width:5px;background:#569cd6"></div><div class="a mm" style="left:558px;top:32px;width:1px;background:#808080"></div><div class="a mm" style="left:547px;top:34px;width:2px;background:#808080"></div><div class="a mm" style="left:549px;top:34px;width:4px;background:#569cd6"></div><div class="a mm" style="left:553px;top:34px;width:1px;background:#808080"></div><div class="a mm" style="left:547px;top:36px;width:1px;background:#808080"></div><div class="a mm" style="left:548px;top:36px;width:4px;background:#569cd6"></div><div class="a mm" style="left:552px;top:36px;width:1px;background:#808080"></div><div class="a mm" style="left:551px;top:38px;width:1px;background:#808080"></div><div class="a mm" style="left:552px;top:38px;width:2px;background:#569cd6"></div><div class="a mm" style="left:554px;top:38px;width:2px;background:#808080"></div><div class="a mm" style="left:556px;top:38px;width:2px;background:#569cd6"></div><div class="a mm" style="left:558px;top:38px;width:1px;background:#808080"></div><div class="a mm" style="left:551px;top:40px;width:1px;background:#808080"></div><div class="a mm" style="left:552px;top:40px;width:3px;background:#569cd6"></div><div class="a mm" style="left:556px;top:40px;width:5px;background:#9cdcfe"></div><div class="a mm" style="left:561px;top:40px;width:1px;background:#808080"></div><div class="a mm" style="left:562px;top:40px;width:3px;background:#ce9178"></div><div class="a mm" style="left:566px;top:40px;width:10px;background:#ce9178"></div><div class="a mm" style="left:576px;top:40px;width:1px;background:#808080"></div><div class="a mm" style="left:555px;top:42px;width:1px;background:#808080"></div><div class="a mm" style="left:556px;top:42px;width:2px;background:#569cd6"></div><div class="a mm" style="left:558px;top:42px;width:1px;background:#808080"></div><div class="a mm" style="left:559px;top:42px;width:4px;background:#d4d4d4"></div><div class="a mm" style="left:564px;top:42px;width:2px;background:#d4d4d4"></div><div class="a mm" style="left:567px;top:42px;width:1px;background:#d4d4d4"></div><div class="a mm" style="left:569px;top:42px;width:5px;background:#d4d4d4"></div><div class="a mm" style="left:575px;top:42px;width:7px;background:#d4d4d4"></div><div class="a mm" style="left:583px;top:42px;width:6px;background:#d4d4d4"></div><div class="a mm" style="left:589px;top:42px;width:2px;background:#808080"></div><div class="a mm" style="left:591px;top:42px;width:2px;background:#569cd6"></div><div class="a mm" style="left:593px;top:42px;width:1px;background:#808080"></div><div class="a mm" style="left:555px;top:44px;width:1px;background:#808080"></div><div class="a mm" style="left:556px;top:44px;width:1px;background:#569cd6"></div><div class="a mm" style="left:557px;top:44px;width:1px;background:#808080"></div><div class="a mm" style="left:558px;top:44px;width:8px;background:#d4d4d4"></div><div class="a mm" style="left:567px;top:44px;width:7px;background:#d4d4d4"></div><div class="a mm" style="left:575px;top:44px;width:8px;background:#d4d4d4"></div><div class="a mm" style="left:584px;top:44px;width:3px;background:#d4d4d4"></div><div class="a mm" style="left:588px;top:44px;width:4px;background:#d4d4d4"></div><div class="a mm" style="left:592px;top:44px;width:2px;background:#808080"></div><div class="a mm" style="left:594px;top:44px;width:1px;background:#569cd6"></div><div class="a mm" style="left:595px;top:44px;width:1px;background:#808080"></div><div class="a mm" style="left:555px;top:46px;width:1px;background:#808080"></div><div class="a mm" style="left:556px;top:46px;width:4px;background:#569cd6"></div><div class="a mm" style="left:561px;top:46px;width:2px;background:#9cdcfe"></div><div class="a mm" style="left:563px;top:46px;width:1px;background:#808080"></div><div class="a mm" style="left:564px;top:46px;width:7px;background:#ce9178"></div><div class="a mm" style="left:571px;top:46px;width:3px;background:#808080"></div><div class="a mm" style="left:574px;top:46px;width:4px;background:#569cd6"></div><div class="a mm" style="left:578px;top:46px;width:1px;background:#808080"></div><div class="a mm" style="left:555px;top:48px;width:1px;background:#808080"></div><div class="a mm" style="left:556px;top:48px;width:2px;background:#569cd6"></div><div class="a mm" style="left:558px;top:48px;width:1px;background:#808080"></div><div class="a mm" style="left:555px;top:50px;width:1px;background:#808080"></div><div class="a mm" style="left:556px;top:50px;width:6px;background:#569cd6"></div><div class="a mm" style="left:563px;top:50px;width:5px;background:#9cdcfe"></div><div class="a mm" style="left:568px;top:50px;width:1px;background:#808080"></div><div class="a mm" style="left:569px;top:50px;width:3px;background:#ce9178"></div><div class="a mm" style="left:573px;top:50px;width:7px;background:#ce9178"></div><div class="a mm" style="left:581px;top:50px;width:7px;background:#ce9178"></div><div class="a mm" style="left:589px;top:50px;width:7px;background:#9cdcfe"></div><div class="a mm" style="left:596px;top:50px;width:1px;background:#808080"></div><div class="a mm" style="left:597px;top:50px;width:5px;background:#ce9178"></div><div class="a mm" style="left:555px;top:52px;width:1px;background:#808080"></div><div class="a mm" style="left:556px;top:52px;width:6px;background:#569cd6"></div><div class="a mm" style="left:563px;top:52px;width:5px;background:#9cdcfe"></div><div class="a mm" style="left:568px;top:52px;width:1px;background:#808080"></div><div class="a mm" style="left:569px;top:52px;width:3px;background:#ce9178"></div><div class="a mm" style="left:573px;top:52px;width:8px;background:#ce9178"></div><div class="a mm" style="left:582px;top:52px;width:7px;background:#ce9178"></div><div class="a mm" style="left:590px;top:52px;width:7px;background:#9cdcfe"></div><div class="a mm" style="left:597px;top:52px;width:1px;background:#808080"></div><div class="a mm" style="left:598px;top:52px;width:4px;background:#ce9178"></div><div class="a mm" style="left:551px;top:54px;width:2px;background:#808080"></div><div class="a mm" style="left:553px;top:54px;width:3px;background:#569cd6"></div><div class="a mm" style="left:556px;top:54px;width:1px;background:#808080"></div><div class="a mm" style="left:551px;top:56px;width:1px;background:#808080"></div><div class="a mm" style="left:552px;top:56px;width:6px;background:#569cd6"></div><div class="a mm" style="left:558px;top:56px;width:1px;background:#808080"></div><div class="a mm" style="left:555px;top:58px;width:3px;background:#569cd6"></div><div class="a mm" style="left:559px;top:58px;width:5px;background:#d4d4d4"></div><div class="a mm" style="left:565px;top:58px;width:1px;background:#d4d4d4"></div><div class="a mm" style="left:567px;top:58px;width:27px;background:#d4d4d4"></div><div class="a mm" style="left:555px;top:60px;width:2px;background:#569cd6"></div><div class="a mm" style="left:558px;top:60px;width:6px;background:#d4d4d4"></div><div class="a mm" style="left:565px;top:60px;width:2px;background:#d4d4d4"></div><div class="a mm" style="left:568px;top:60px;width:4px;background:#569cd6"></div><div class="a mm" style="left:572px;top:60px;width:2px;background:#d4d4d4"></div><div class="a mm" style="left:559px;top:62px;width:2px;background:#d4d4d4"></div><div class="a mm" style="left:561px;top:62px;width:8px;background:#ce9178"></div><div class="a mm" style="left:569px;top:62px;width:7px;background:#d4d4d4"></div><div class="a mm" style="left:576px;top:62px;width:3px;background:#ce9178"></div><div class="a mm" style="left:580px;top:62px;width:5px;background:#ce9178"></div><div class="a mm" style="left:586px;top:62px;width:5px;background:#ce9178"></div><div class="a mm" style="left:591px;top:62px;width:2px;background:#d4d4d4"></div><div class="a mm" style="left:555px;top:64px;width:1px;background:#d4d4d4"></div><div class="a mm" style="left:556px;top:64px;width:4px;background:#569cd6"></div><div class="a mm" style="left:560px;top:64px;width:1px;background:#d4d4d4"></div><div class="a mm" style="left:559px;top:66px;width:3px;background:#569cd6"></div><div class="a mm" style="left:563px;top:66px;width:1px;background:#d4d4d4"></div><div class="a mm" style="left:564px;top:66px;width:3px;background:#569cd6"></div><div class="a mm" style="left:568px;top:66px;width:1px;background:#d4d4d4"></div><div class="a mm" style="left:570px;top:66px;width:1px;background:#d4d4d4"></div><div class="a mm" style="left:571px;top:66px;width:1px;background:#b5cea8"></div><div class="a mm" style="left:572px;top:66px;width:1px;background:#d4d4d4"></div><div class="a mm" style="left:574px;top:66px;width:1px;background:#d4d4d4"></div><div class="a mm" style="left:576px;top:66px;width:1px;background:#d4d4d4"></div><div class="a mm" style="left:578px;top:66px;width:13px;background:#d4d4d4"></div><div class="a mm" style="left:592px;top:66px;width:5px;background:#d4d4d4"></div><div class="a mm" style="left:563px;top:68px;width:2px;background:#d4d4d4"></div><div class="a mm" style="left:565px;top:68px;width:8px;background:#ce9178"></div><div class="a mm" style="left:573px;top:68px;width:26px;background:#d4d4d4"></div><div class="a mm" style="left:600px;top:68px;width:1px;background:#d4d4d4"></div><div class="a mm" style="left:559px;top:70px;width:1px;background:#d4d4d4"></div><div class="a mm" style="left:555px;top:72px;width:1px;background:#d4d4d4"></div><div class="a mm" style="left:555px;top:76px;width:8px;background:#569cd6"></div><div class="a mm" style="left:564px;top:76px;width:19px;background:#d4d4d4"></div><div class="a mm" style="left:559px;top:78px;width:38px;background:#d4d4d4"></div><div class="a mm" style="left:598px;top:78px;width:4px;background:#ce9178"></div><div class="a mm" style="left:563px;top:80px;width:12px;background:#d4d4d4"></div><div class="a mm" style="left:576px;top:80px;width:4px;background:#ce9178"></div><div class="a mm" style="left:581px;top:80px;width:5px;background:#ce9178"></div><div class="a mm" style="left:559px;top:82px;width:3px;background:#d4d4d4"></div><div class="a mm" style="left:555px;top:84px;width:1px;background:#d4d4d4"></div><div class="a mm" style="left:555px;top:88px;width:8px;background:#569cd6"></div><div class="a mm" style="left:564px;top:88px;width:21px;background:#d4d4d4"></div><div class="a mm" style="left:559px;top:90px;width:2px;background:#569cd6"></div><div class="a mm" style="left:562px;top:90px;width:16px;background:#d4d4d4"></div><div class="a mm" style="left:579px;top:90px;width:2px;background:#d4d4d4"></div><div class="a mm" style="left:582px;top:90px;width:1px;background:#b5cea8"></div><div class="a mm" style="left:583px;top:90px;width:2px;background:#d4d4d4"></div><div class="a mm" style="left:563px;top:92px;width:2px;background:#d4d4d4"></div><div class="a mm" style="left:565px;top:92px;width:8px;background:#ce9178"></div><div class="a mm" style="left:573px;top:92px;width:7px;background:#d4d4d4"></div><div class="a mm" style="left:580px;top:92px;width:3px;background:#ce9178"></div><div class="a mm" style="left:584px;top:92px;width:4px;background:#ce9178"></div><div class="a mm" style="left:589px;top:92px;width:9px;background:#ce9178"></div><div class="a mm" style="left:598px;top:92px;width:2px;background:#d4d4d4"></div><div class="a mm" style="left:563px;top:94px;width:6px;background:#569cd6"></div><div class="a mm" style="left:569px;top:94px;width:1px;background:#d4d4d4"></div><div class="a mm" style="left:559px;top:96px;width:1px;background:#d4d4d4"></div><div class="a mm" style="left:559px;top:98px;width:2px;background:#d4d4d4"></div><div class="a mm" style="left:561px;top:98px;width:8px;background:#ce9178"></div><div class="a mm" style="left:569px;top:98px;width:7px;background:#d4d4d4"></div><div class="a mm" style="left:576px;top:98px;width:2px;background:#ce9178"></div><div class="a mm" style="left:578px;top:98px;width:2px;background:#d4d4d4"></div><div class="a mm" style="left:559px;top:100px;width:3px;background:#569cd6"></div><div class="a mm" style="left:563px;top:100px;width:1px;background:#d4d4d4"></div><div class="a mm" style="left:564px;top:100px;width:3px;background:#569cd6"></div><div class="a mm" style="left:568px;top:100px;width:1px;background:#d4d4d4"></div><div class="a mm" style="left:570px;top:100px;width:1px;background:#d4d4d4"></div><div class="a mm" style="left:571px;top:100px;width:1px;background:#b5cea8"></div><div class="a mm" style="left:572px;top:100px;width:1px;background:#d4d4d4"></div><div class="a mm" style="left:574px;top:100px;width:1px;background:#d4d4d4"></div><div class="a mm" style="left:576px;top:100px;width:1px;background:#d4d4d4"></div><div class="a mm" style="left:578px;top:100px;width:16px;background:#d4d4d4"></div><div class="a mm" style="left:595px;top:100px;width:5px;background:#d4d4d4"></div><div class="a mm" style="left:563px;top:102px;width:2px;background:#d4d4d4"></div><div class="a mm" style="left:565px;top:102px;width:8px;background:#ce9178"></div><div class="a mm" style="left:573px;top:102px;width:29px;background:#d4d4d4"></div><div class="a mm" style="left:559px;top:104px;width:1px;background:#d4d4d4"></div><div class="a mm" style="left:555px;top:106px;width:1px;background:#d4d4d4"></div><div class="a mm" style="left:555px;top:110px;width:8px;background:#569cd6"></div><div class="a mm" style="left:564px;top:110px;width:17px;background:#d4d4d4"></div><div class="a mm" style="left:559px;top:112px;width:3px;background:#569cd6"></div><div class="a mm" style="left:563px;top:112px;width:6px;background:#d4d4d4"></div><div class="a mm" style="left:570px;top:112px;width:1px;background:#d4d4d4"></div><div class="a mm" style="left:572px;top:112px;width:29px;background:#ce9178"></div><div class="a mm" style="left:559px;top:114px;width:8px;background:#d4d4d4"></div><div class="a mm" style="left:563px;top:116px;width:4px;background:#d4d4d4"></div><div class="a mm" style="left:568px;top:116px;width:34px;background:#ce9178"></div><div class="a mm" style="left:563px;top:118px;width:5px;background:#d4d4d4"></div><div class="a mm" style="left:569px;top:118px;width:5px;background:#d4d4d4"></div><div class="a mm" style="left:575px;top:118px;width:6px;background:#ce9178"></div><div class="a mm" style="left:581px;top:118px;width:1px;background:#d4d4d4"></div><div class="a mm" style="left:583px;top:118px;width:4px;background:#d4d4d4"></div><div class="a mm" style="left:588px;top:118px;width:7px;background:#ce9178"></div><div class="a mm" style="left:595px;top:118px;width:2px;background:#d4d4d4"></div><div class="a mm" style="left:563px;top:120px;width:7px;background:#d4d4d4"></div><div class="a mm" style="left:571px;top:120px;width:6px;background:#ce9178"></div><div class="a mm" style="left:577px;top:120px;width:1px;background:#d4d4d4"></div><div class="a mm" style="left:563px;top:122px;width:8px;background:#d4d4d4"></div><div class="a mm" style="left:572px;top:122px;width:8px;background:#569cd6"></div><div class="a mm" style="left:580px;top:122px;width:7px;background:#d4d4d4"></div><div class="a mm" style="left:567px;top:124px;width:18px;background:#d4d4d4"></div><div class="a mm" style="left:563px;top:126px;width:1px;background:#d4d4d4"></div><div class="a mm" style="left:559px;top:128px;width:3px;background:#d4d4d4"></div><div class="a mm" style="left:555px;top:130px;width:1px;background:#d4d4d4"></div><div class="a mm" style="left:551px;top:132px;width:2px;background:#808080"></div><div class="a mm" style="left:553px;top:132px;width:6px;background:#569cd6"></div><div class="a mm" style="left:559px;top:132px;width:1px;background:#808080"></div><div class="a mm" style="left:547px;top:134px;width:2px;background:#808080"></div><div class="a mm" style="left:549px;top:134px;width:4px;background:#569cd6"></div><div class="a mm" style="left:553px;top:134px;width:1px;background:#808080"></div><div class="a mm" style="left:543px;top:136px;width:2px;background:#808080"></div><div class="a mm" style="left:545px;top:136px;width:4px;background:#569cd6"></div><div class="a mm" style="left:549px;top:136px;width:1px;background:#808080"></div>
<div class="a" style="left:602px;top:0;width:14px;height:729px;background:#1e1e1e;border-left:1px solid #333"></div>
<div class="a" style="left:602px;top:0;width:14px;height:266px;background:#4a4a4a"></div>
<div class="a" style="left:603px;top:40px;width:13px;height:2px;background:#6e6e6e"></div>
<div class="a" style="left:67px;top:725px;width:241px;height:4px;background:rgba(121,121,121,.55)"></div>
</div>
<div class="a" style="left:0;top:818px;width:856px;height:24px;background:#4fa2e8"></div>
<svg class="a" style="left:15px;top:824px" width="15" height="13" viewBox="0 0 15 13"><g fill="#fff"><rect x="1" y="2.5" width="10" height="2"/><polygon points="10,0 14.5,3.5 10,7"/><rect x="4" y="8.5" width="10" height="2"/><polygon points="5,6 0.5,9.5 5,13"/></g></svg>
<div class="a t" style="left:34px;top:823.00px;font-size:13.7px;color:#fff;">Fri Oct 16 2020 18:06:17 GMT+0800 (Hong Kong Standard Time)</div>
<svg class="a" style="left:535px;top:823px" width="10" height="13" viewBox="0 0 9 12"><path d="M0.5,0.5 H6 L8.5,3 V11.5 H0.5 Z" fill="#fff"/><path d="M6,0.5 V3 H8.5" fill="none" stroke="#4fa2e8" stroke-width="0.6"/><path d="M3.3,5.9 L1.7,7.7 L3.3,9.5 M5.7,5.9 L7.3,7.7 L5.7,9.5 M5.1,5.6 L3.9,9.8" fill="none" stroke="#4fa2e8" stroke-width="1"/></svg>
<div class="a t" style="left:555px;top:821.96px;font-size:14.1px;color:#fff;">web:/Dummy/index.html</div>
<div class="a t" style="left:721px;top:821.88px;font-size:14.2px;color:#fff;">HTML</div>
<div class="a t" style="left:775px;top:821.96px;font-size:14.1px;color:#fff;">NotepadA</div>
<div class="a" style="left:862px;top:22px;width:854px;height:94px;background:#fafafa"></div>
<div class="a" style="left:862px;top:22px;width:854px;height:1px;background:#000"></div>
<div class="a" style="left:862px;top:23px;width:854px;height:1px;background:#fff"></div>
<div class="a" style="left:862px;top:116px;width:854px;height:2px;background:#22a8e2"></div>
<div class="a" style="left:862px;top:118px;width:248px;height:724px;background:#f4f4f4"></div>
<div class="a" style="left:1110px;top:118px;width:2px;height:724px;background:#e4e8ee"></div>
<div class="a" style="left:1112px;top:118px;width:604px;height:724px;background:#fff"></div>
<svg class="a" style="left:868px;top:6px" width="14" height="13" viewBox="0 0 14 13"><path d="M0,1 Q0,0 1,0 H5 L6.2,1.5 H13 Q14,1.5 14,2.5 V12 Q14,13 13,13 H1 Q0,13 0,12 Z" fill="#4a8fe0"/><rect x="1" y="3" width="12" height="1.6" fill="#e8e8e8"/><rect x="0" y="5" width="14" height="8" fill="#5296e6"/></svg>
<div class="a t" style="left:889px;top:6.32px;font-size:13.8px;color:#fff;">File Manager - Dummy</div>
<div class="a" style="left:1630px;top:14px;width:10px;height:3px;background:#fff"></div><svg class="a" style="left:1662px;top:6px" width="13" height="12" viewBox="0 0 13 12"><g fill="none" stroke="#fff" stroke-width="1.6"><rect x="1" y="4.5" width="7.5" height="6.5"/><polyline points="4,4.5 4,1 12,1 12,7.5 8.5,7.5"/></g></svg><svg class="a" style="left:1695px;top:6px" width="13" height="13" viewBox="0 0 13 13"><g stroke="#fff" stroke-width="2.6"><line x1="1" y1="1" x2="12" y2="12"/><line x1="12" y1="1" x2="1" y2="12"/></g></svg>
<div class="a btn" style="left:873.5px;top:31px;width:35.0px;height:30px;background:#ececec;"></div>
<svg class="a" style="left:886px;top:40px" width="12" height="12" viewBox="0 0 12 12"><path d="M6.2,1 L1.5,6 L6.2,11 M1.8,6 H11" fill="none" stroke="#767676" stroke-width="2.6" stroke-linecap="round" stroke-linejoin="round"/></svg>
<div class="a btn" style="left:910.5px;top:31px;width:35.5px;height:30px;background:#ececec;"></div>
<svg class="a" style="left:922.5px;top:40px" width="12" height="12" viewBox="0 0 12 12"><path d="M1,6.2 L6,1.5 L11,6.2 M6,1.8 V11" fill="none" stroke="#767676" stroke-width="2.6" stroke-linecap="round" stroke-linejoin="round"/></svg>
<div class="a btn" style="left:988.5px;top:31px;width:34.5px;height:30px;background:#ececec;"></div>
<svg class="a" style="left:998.5px;top:39.5px" width="15" height="11" viewBox="0 0 15 11"><path d="M0,1 Q0,0 1,0 H4.5 L5.8,1.5 H11 Q12,1.5 12,2.5 V3.8 H3.2 L0,9.5 Z" fill="#767676"/><path d="M3.8,4.8 H15 L11.5,11 H0.3 Z" fill="#767676"/></svg>
<div class="a btn" style="left:1025.5px;top:31px;width:34.5px;height:30px;background:#ececec;"></div>
<svg class="a" style="left:1035.5px;top:38.5px" width="15" height="12" viewBox="0 0 15 12"><path d="M9,3 H2 Q1,3 1,4 V10 Q1,11 2,11 H9 Q10,11 10,10 V7.5" fill="none" stroke="#767676" stroke-width="1.6"/><path d="M6,7 L13,1 M9,1 H14 V5.5" fill="none" stroke="#767676" stroke-width="1.8" stroke-linecap="round" stroke-linejoin="round"/></svg>
<div class="a btn" style="left:1062.5px;top:29px;width:155px;height:33px;background:#ececec"></div>
<div class="a" style="left:1062.5px;top:29px;width:34px;height:33px;background:#e0e0e0;border-radius:4px 0 0 4px"></div>
<svg class="a" style="left:1073.5px;top:37.5px" width="13" height="12" viewBox="0 0 13 12"><path d="M5,0 H8 V4.5 H10.5 L6.5,8.5 L2.5,4.5 H5 Z" fill="#767676"/><path d="M0,7.5 H4 L6.5,10 L9,7.5 H13 V12 H0 Z" fill="#767676"/><circle cx="10" cy="10.2" r=".6" fill="#e0e0e0"/><circle cx="11.6" cy="10.2" r=".6" fill="#e0e0e0"/></svg>
<div class="a t" style="left:1127.8px;top:40.23px;font-size:11.9px;color:#595959;font-weight:bold">Download</div>
<div class="a btn" style="left:1219.5px;top:31px;width:35.5px;height:30px;background:#ececec;"></div>
<svg class="a" style="left:1230.5px;top:38.5px" width="14" height="14" viewBox="0 0 14 14"><path d="M1,3.5 L3.5,1 H7.5 V4.8 M1,3.5 V10 H5.5" fill="none" stroke="#767676" stroke-width="1.1"/><path d="M5.5,5 H10 L13,8 V13.2 H5.5 Z" fill="#ececec" stroke="#767676" stroke-width="1.1"/><path d="M10,5 V8 H13" fill="none" stroke="#767676" stroke-width="0.9"/><path d="M3.5,1 V3.5 H1" fill="none" stroke="#767676" stroke-width="1"/></svg>
<div class="a btn" style="left:1257px;top:31px;width:35px;height:30px;background:#ececec;"></div>
<svg class="a" style="left:1267.5px;top:38.5px" width="14" height="14" viewBox="0 0 14 14"><path d="M0.5,1 H8.5 V12 H0.5 Z" fill="#767676"/><rect x="2" y="0" width="5" height="2" fill="#767676"/><path d="M6,5 H10.5 L13.2,7.8 V13.2 H6 Z" fill="#ececec" stroke="#767676" stroke-width="1.1"/><path d="M10.5,5 V7.8 H13.2" fill="none" stroke="#767676" stroke-width="0.9"/></svg>
<div class="a btn" style="left:1295px;top:31px;width:34.5px;height:30px;background:#ececec;"></div>
<svg class="a" style="left:1305px;top:40px" width="14" height="11" viewBox="0 0 14 11"><g fill="none" stroke="#767676" stroke-width="1.2"><circle cx="2.6" cy="2.6" r="2"/><circle cx="2.6" cy="8.4" r="2"/><path d="M4.3,3.6 L13.5,9.5 M4.3,7.4 L13.5,1.5"/></g></svg>
<div class="a btn" style="left:1332px;top:31px;width:34.5px;height:30px;background:#ececec;"></div>
<svg class="a" style="left:1343.5px;top:38.5px" width="12" height="14" viewBox="0 0 12 14"><path d="M1,1 H7.5 L11,4.5 V13 H1 Z" fill="none" stroke="#767676" stroke-width="1.2"/><path d="M7.5,1 V4.5 H11" fill="none" stroke="#767676" stroke-width="1"/></svg>
<div class="a btn" style="left:1369px;top:31px;width:35px;height:30px;background:#ececec;"></div>
<svg class="a" style="left:1379.5px;top:39.5px" width="14" height="11" viewBox="0 0 14 11"><path d="M1,1 H5 L6.3,2.5 H13 V10 H1 Z" fill="none" stroke="#767676" stroke-width="1.2" stroke-linejoin="round"/></svg>
<div class="a btn" style="left:1406.5px;top:31px;width:34.5px;height:30px;background:#ececec;"></div>
<svg class="a" style="left:1417.5px;top:38.5px" width="13" height="13" viewBox="0 0 13 13"><path d="M6.5,0 L10.5,4 H8 V8.5 H5 V4 H2.5 Z" fill="#767676"/><path d="M0,8.5 H4 V10 H9 V8.5 H13 V13 H0 Z" fill="#767676"/><circle cx="10" cy="11.3" r=".6" fill="#ececec"/><circle cx="11.6" cy="11.3" r=".6" fill="#ececec"/></svg>
<div class="a btn" style="left:1444px;top:31px;width:34.5px;height:30px;background:#ececec;"></div>
<svg class="a" style="left:1455.5px;top:38.5px" width="8" height="14" viewBox="0 0 8 14"><path d="M1,1 Q4,1 4,3 V11 Q4,13 1,13 M7,1 Q4,1 4,3 M7,13 Q4,13 4,11 M2.5,7 H5.5" fill="none" stroke="#767676" stroke-width="1.4"/></svg>
<div class="a" style="left:1481px;top:30px;width:37px;height:32px;background:#d45b52;border-radius:4px"></div>
<svg class="a" style="left:1494px;top:39px" width="11" height="13" viewBox="0 0 11 13"><g fill="none" stroke="#f6dcda" stroke-width="1.3"><path d="M0.5,2.5 H10.5 M3.5,2.5 V1 H7.5 V2.5 M1.8,2.5 L2.5,12.3 H8.5 L9.2,2.5 M4,5 V10 M5.5,5 V10 M7,5 V10"/></g></svg>
<div class="a btn" style="left:1520px;top:31px;width:35px;height:30px;background:#ececec;"></div>
<svg class="a" style="left:1531.5px;top:39.5px" width="12" height="12" viewBox="0 0 12 12"><g fill="none" stroke="#767676" stroke-width="2"><path d="M1.5,5 A4.7,4.7 0 0 1 10,3.2 M10.5,7 A4.7,4.7 0 0 1 2,8.8"/></g><path d="M11.5,0 V5.2 H6.3 Z M0.5,12 V6.8 H5.7 Z" fill="#767676"/></svg>
<div class="a btn" style="left:1557.5px;top:31px;width:35.0px;height:30px;background:#ececec;"></div>
<svg class="a" style="left:1571px;top:40px" width="6" height="11" viewBox="0 0 7 13"><circle cx="3.8" cy="1.8" r="1.8" fill="#767676"/><path d="M0.5,4.5 H5 V11 H6.5 V13 H0.5 V11 H2 V6.5 H0.5 Z" fill="#767676"/></svg>
<div class="a btn" style="left:1594.5px;top:31px;width:35.5px;height:30px;background:#ececec;"></div>
<svg class="a" style="left:1608px;top:41px" width="7.5" height="9.5" viewBox="0 0 9 12"><path d="M1.2,3.5 Q1.2,0.8 4.5,0.8 Q7.8,0.8 7.8,3.3 Q7.8,5 5.8,6 Q5,6.5 5,7.8" fill="none" stroke="#767676" stroke-width="2.3"/><rect x="3.4" y="9.3" width="2.8" height="2.7" fill="#767676"/></svg>
<div class="a btn" style="left:876.5px;top:71px;width:34.5px;height:31.5px;background:#ececec;"></div>
<svg class="a" style="left:888.5px;top:81px" width="11" height="10" viewBox="0 0 11 10"><g fill="#767676"><rect x="0" y="0" width="11" height="2"/><rect x="0" y="4" width="11" height="2"/><rect x="0" y="8" width="11" height="2"/></g></svg>
<div class="a" style="left:914px;top:70px;width:37px;height:33px;background:#333;border-radius:4px"></div>
<svg class="a" style="left:926px;top:80px" width="12" height="12" viewBox="0 0 12 12"><path d="M7,0.8 A5.5,5.5 0 1 0 11.4,8.6 A5,5 0 0 1 7,0.8 Z" fill="none" stroke="#e0e0e0" stroke-width="1.3"/></svg>
<div class="a" style="left:954.5px;top:75px;width:126px;height:25.5px;background:#fff;border:1px solid #dadada;border-radius:3px"></div>
<svg class="a" style="left:961px;top:81px" width="13" height="11" viewBox="0 0 13 11"><path d="M0,1 Q0,0 1,0 H4.8 L6,1.6 H12 Q13,1.6 13,2.6 V10 Q13,11 12,11 H1 Q0,11 0,10 Z" fill="#5a5a5a"/></svg>
<div class="a t" style="left:984.2px;top:80.48px;font-size:14.2px;color:#555;">web: / Dummy</div>
<div class="a" style="left:1492px;top:68px;width:102px;height:30.5px;background:#fff;border-radius:4px;box-shadow:0 0 1px rgba(0,0,0,.06)"></div>
<div class="a t" style="left:1507px;top:78.69px;font-size:11px;color:#444;">Ascending</div>
<svg class="a" style="left:1574px;top:80px" width="9" height="5" viewBox="0 0 9 5"><polygon points="0,0 9,0 4.5,5" fill="#555"/></svg>
<div class="a btn" style="left:1596.5px;top:67.5px;width:34.5px;height:31.0px;background:#ececec;"></div>
<svg class="a" style="left:1607.5px;top:76.5px" width="13" height="13" viewBox="0 0 13 13"><circle cx="5.3" cy="5.3" r="4.2" fill="none" stroke="#767676" stroke-width="1.9"/><path d="M8.3,8.3 L12,12" stroke="#767676" stroke-width="2.3" stroke-linecap="round"/></svg>
<div class="a btn" style="left:1634px;top:67.5px;width:35px;height:31.0px;background:#ececec;"></div>
<svg class="a" style="left:1646px;top:77px" width="12" height="11" viewBox="0 0 12 11"><g fill="#767676"><rect x="0" y="0" width="5.4" height="5"/><rect x="6.6" y="0" width="5.4" height="5"/><rect x="0" y="6" width="5.4" height="5"/><rect x="6.6" y="6" width="5.4" height="5"/></g></svg>
<div class="a btn" style="left:1672px;top:67.5px;width:34.5px;height:31.0px;background:#f3f3f3;"></div>
<svg class="a" style="left:1682px;top:77px" width="14" height="11" viewBox="0 0 14 11"><g fill="#adadad"><rect x="0" y="0" width="14" height="1.5"/><rect x="0" y="3.1" width="14" height="1.5"/><rect x="0" y="6.3" width="14" height="1.5"/><rect x="0" y="9.5" width="14" height="1.5"/></g></svg>
<svg class="a" style="left:878px;top:144px" width="9" height="5"><polygon points="0,0 9,0 4.5,5" fill="#555"/></svg>
<div class="a t" style="left:899.4px;top:139.61px;font-size:13.1px;color:#555;">User</div>
<svg class="a" style="left:884px;top:163px" width="15" height="13" viewBox="0 0 15 13"><path d="M1.2,0.8 H13.8 Q14.5,0.8 14.5,1.5 V9.5 Q14.5,10.2 13.8,10.2 H1.2 Q0.5,10.2 0.5,9.5 V1.5 Q0.5,0.8 1.2,0.8 Z" fill="none" stroke="#444" stroke-width="1.4"/><rect x="0.5" y="7.8" width="14" height="2.4" fill="#444"/><path d="M6,10 H9 L9.5,12 H11 V13 H4 V12 H5.5 Z" fill="#444"/></svg>
<div class="a t" style="left:909.5px;top:165.85px;font-size:14px;color:#444;">Desktop</div>
<svg class="a" style="left:885px;top:189px" width="13" height="13" viewBox="0 0 13 13"><path d="M4.5,3 L12,0.5 V9.8" fill="none" stroke="#444" stroke-width="1.6"/><path d="M4.5,2 L12,0 V3 L4.5,5.2 Z" fill="#444"/><ellipse cx="2.8" cy="10.5" rx="2.5" ry="1.8" fill="#444"/><ellipse cx="10.3" cy="9.5" rx="2.4" ry="1.7" fill="#444"/><path d="M4.5,3 V10.5" stroke="#444" stroke-width="1.5"/></svg>
<div class="a t" style="left:909.5px;top:191.65px;font-size:14px;color:#444;">Music</div>
<svg class="a" style="left:884px;top:216px" width="15" height="13" viewBox="0 0 15 13"><rect x="0.7" y="0.7" width="13.6" height="11.6" fill="none" stroke="#444" stroke-width="1.4"/><path d="M3.6,0.7 V12.3 M11.4,0.7 V12.3 M0.7,4 H3.6 M0.7,6.5 H14.3 M0.7,9 H3.6 M11.4,4 H14.3 M11.4,9 H14.3" stroke="#444" stroke-width="1.2"/></svg>
<div class="a t" style="left:909.5px;top:218.05px;font-size:14px;color:#444;">Video</div>
<svg class="a" style="left:878px;top:254px" width="9" height="5"><polygon points="0,0 9,0 4.5,5" fill="#555"/></svg>
<div class="a t" style="left:899.4px;top:249.41px;font-size:13.1px;color:#555;">Storage</div>
<svg class="a" style="left:884px;top:274.5px" width="14" height="11" viewBox="0 0 14 11"><path d="M3,0.7 H11 L13.3,5.5 V10.3 H0.7 V5.5 Z M0.7,5.5 H13.3" fill="none" stroke="#444" stroke-width="1.3" stroke-linejoin="round"/><circle cx="9.5" cy="8" r=".6" fill="#444"/><circle cx="11.2" cy="8" r=".6" fill="#444"/></svg>
<div class="a t" style="left:909px;top:275.90px;font-size:13.7px;color:#444;">User (user:/)</div>
<svg class="a" style="left:884px;top:300.5px" width="14" height="11" viewBox="0 0 14 11"><path d="M3,0.7 H11 L13.3,5.5 V10.3 H0.7 V5.5 Z M0.7,5.5 H13.3" fill="none" stroke="#444" stroke-width="1.3" stroke-linejoin="round"/><circle cx="9.5" cy="8" r=".6" fill="#444"/><circle cx="11.2" cy="8" r=".6" fill="#444"/></svg>
<div class="a t" style="left:909px;top:301.14px;font-size:14.6px;color:#444;">tmp (tmp:/)</div>
<svg class="a" style="left:884px;top:326.5px" width="14" height="11" viewBox="0 0 14 11"><path d="M3,0.7 H11 L13.3,5.5 V10.3 H0.7 V5.5 Z M0.7,5.5 H13.3" fill="none" stroke="#444" stroke-width="1.3" stroke-linejoin="round"/><circle cx="9.5" cy="8" r=".6" fill="#444"/><circle cx="11.2" cy="8" r=".6" fill="#444"/></svg>
<div class="a t" style="left:909px;top:327.82px;font-size:13.8px;color:#444;">Web (web:/)</div>
<div class="a" style="left:1140px;top:146px;width:548px;height:91px;background:#fff;border:1px solid #e3e3e3;border-radius:4px;box-shadow:0 1px 2px rgba(0,0,0,.06)"></div>
<div class="a" style="left:1141px;top:191px;width:546px;height:1px;background:#e3e3e3"></div>
<div class="a" style="left:1140px;top:253px;width:548px;height:91px;background:#fff;border:1px solid #e3e3e3;border-radius:4px;box-shadow:0 1px 2px rgba(0,0,0,.06)"></div>
<div class="a" style="left:1141px;top:298px;width:546px;height:1px;background:#e3e3e3"></div>
<svg class="a" style="left:1157px;top:162px" width="13" height="11" viewBox="0 0 13 12"><path d="M0,1.2 Q0,0 1.2,0 H5 L6.5,1.8 H11.8 Q13,1.8 13,3 V10.8 Q13,12 11.8,12 H1.2 Q0,12 0,10.8 Z" fill="#111"/></svg>
<svg class="a" style="left:1157px;top:207px" width="13" height="11" viewBox="0 0 13 12"><path d="M0,1.2 Q0,0 1.2,0 H5 L6.5,1.8 H11.8 Q13,1.8 13,3 V10.8 Q13,12 11.8,12 H1.2 Q0,12 0,10.8 Z" fill="#111"/></svg>
<div class="a t" style="left:1186.8px;top:160.88px;font-size:14.2px;color:#222;">backend</div>
<div class="a t" style="left:1187px;top:205.80px;font-size:14.3px;color:#222;">img</div>
<svg class="a" style="left:1157px;top:267px" width="12" height="15" viewBox="0 0 12 15"><path d="M1,1 H7.8 L11,4.2 V14 H1 Z" fill="none" stroke="#111" stroke-width="1.4"/><path d="M7.8,1 V4.2 H11" fill="none" stroke="#111" stroke-width="1"/><path d="M4.3,6.8 L2.8,8.7 L4.3,10.6 M7.7,6.8 L9.2,8.7 L7.7,10.6 M6.6,6.3 L5.4,11.2" fill="none" stroke="#111" stroke-width="1"/></svg>
<div class="a t" style="left:1187px;top:267.46px;font-size:14.7px;color:#222;">index.html</div>
<svg class="a" style="left:1157px;top:312px" width="12" height="15" viewBox="0 0 12 15"><path d="M1,1 H7.8 L11,4.2 V14 H1 Z" fill="none" stroke="#111" stroke-width="1.4"/><path d="M7.8,1 V4.2 H11" fill="none" stroke="#111" stroke-width="1"/></svg>
<div class="a t" style="left:1187px;top:312.63px;font-size:14.5px;color:#222;">init.agi</div>
<svg class="a" style="left:13px;top:853px" width="20" height="20" viewBox="0 0 20 20"><g fill="#fff"><circle cx="2.5" cy="2.5" r="2.4"/><circle cx="2.5" cy="10.0" r="2.4"/><circle cx="2.5" cy="17.5" r="2.4"/><circle cx="10.0" cy="2.5" r="2.4"/><circle cx="10.0" cy="10.0" r="2.4"/><circle cx="10.0" cy="17.5" r="2.4"/><circle cx="17.5" cy="2.5" r="2.4"/><circle cx="17.5" cy="10.0" r="2.4"/><circle cx="17.5" cy="17.5" r="2.4"/></g></svg>
<svg class="a" style="left:63px;top:849px" width="30.0" height="28.0" viewBox="0 0 30 28"><g fill="none" stroke="#00eeee" stroke-width="2.6" stroke-linecap="round" stroke-linejoin="miter"><polyline points="16,5.4 7.8,11.4 15.3,16.6"/><polyline points="14.2,10.9 22.2,16.3 14,22"/></g></svg>
<div class="a t" style="left:98px;top:857.66px;font-size:12.8px;color:#fff;">NotepadA</div>
<svg class="a" style="left:271px;top:854px" width="18" height="17" viewBox="0 0 18 17"><path d="M0,1 Q0,0 1,0 H6 L7.5,2 H17 Q18,2 18,3 V16 Q18,17 17,17 H1 Q0,17 0,16 Z" fill="#4a8fe0"/><rect x="1.5" y="3.5" width="15" height="2" fill="#e8e8e8"/><rect x="0" y="6" width="18" height="11" fill="#5296e6"/></svg>
<div class="a t" style="left:300px;top:858.00px;font-size:12.4px;color:#fff;">File Manager</div>
</body></html>
